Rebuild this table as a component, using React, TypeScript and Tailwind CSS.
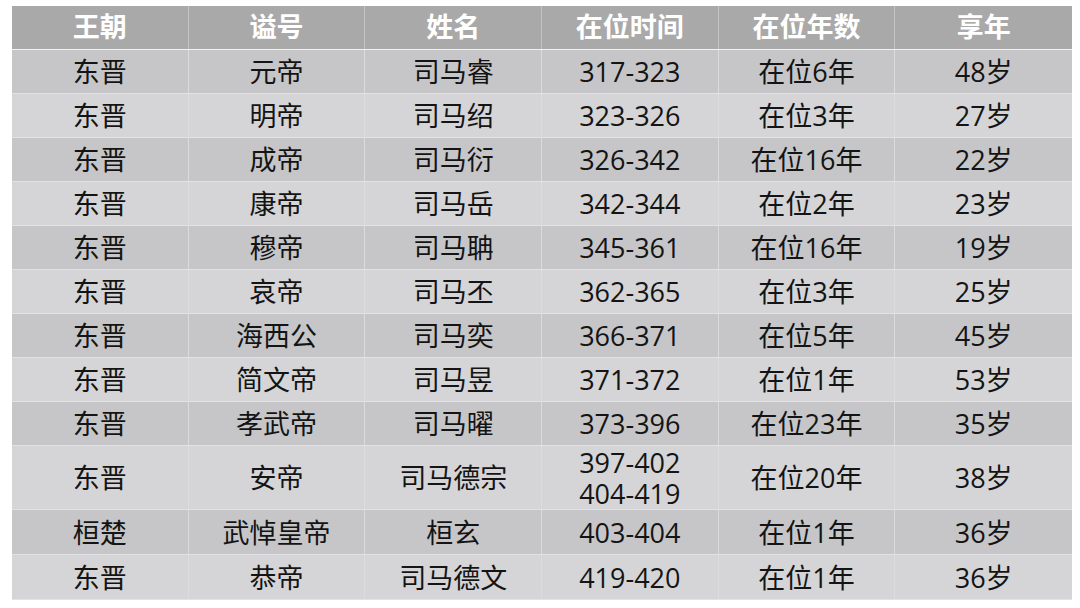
const rows: { cells: string[]; h: string }[] = [
  { cells: ["东晋", "元帝", "司马睿", "317-323", "在位6年", "48岁"], h: "h-[44px]" },
  { cells: ["东晋", "明帝", "司马绍", "323-326", "在位3年", "27岁"], h: "h-[44px]" },
  { cells: ["东晋", "成帝", "司马衍", "326-342", "在位16年", "22岁"], h: "h-[44px]" },
  { cells: ["东晋", "康帝", "司马岳", "342-344", "在位2年", "23岁"], h: "h-[44px]" },
  { cells: ["东晋", "穆帝", "司马聃", "345-361", "在位16年", "19岁"], h: "h-[44px]" },
  { cells: ["东晋", "哀帝", "司马丕", "362-365", "在位3年", "25岁"], h: "h-[44px]" },
  { cells: ["东晋", "海西公", "司马奕", "366-371", "在位5年", "45岁"], h: "h-[44px]" },
  { cells: ["东晋", "简文帝", "司马昱", "371-372", "在位1年", "53岁"], h: "h-[44px]" },
  { cells: ["东晋", "孝武帝", "司马曜", "373-396", "在位23年", "35岁"], h: "h-[44px]" },
  { cells: ["东晋", "安帝", "司马德宗", "397-402\n404-419", "在位20年", "38岁"], h: "h-[64px]" },
  { cells: ["桓楚", "武悼皇帝", "桓玄", "403-404", "在位1年", "36岁"], h: "h-[45px]" },
  { cells: ["东晋", "恭帝", "司马德文", "419-420", "在位1年", "36岁"], h: "h-[45px]" },
];

const headers = ["王朝", "谥号", "姓名", "在位时间", "在位年数", "享年"];

export default function App() {
  return (
    <div
      className="w-[1080px] h-[608px] bg-white pt-[6px] pl-[12px]"
      style={{ fontFamily: '"Open Sans", "Noto Sans CJK SC", sans-serif' }}
    >
      <div className="w-[1060px]">
        <div className="grid grid-cols-6 h-[44px] bg-[#a9a9a9] border-b border-[#f2f2f2]">
          {headers.map((t, i) => (
            <div
              key={t}
              className={
                "flex items-center justify-center text-[27px] font-bold text-white " +
                (i < 5 ? "border-r border-[#c4c4c4]" : "")
              }
            >
              {t}
            </div>
          ))}
        </div>
        {rows.map((r, ri) => (
          <div
            key={ri}
            className={
              "grid grid-cols-6 border-b border-[#e2e2e4] " +
              r.h +
              " " +
              (ri % 2 === 0 ? "bg-[#c6c6c8]" : "bg-[#d5d5d7]")
            }
          >
            {r.cells.map((c, ci) => (
              <div
                key={ci}
                className={
                  "flex flex-col items-center justify-center text-[27px] leading-[31px] text-[#141414] " +
                  (ci < 5 ? "border-r border-[#dcdcde]" : "")
                }
              >
                {c.split("\n").map((line) => (
                  <span key={line}>{line}</span>
                ))}
              </div>
            ))}
          </div>
        ))}
      </div>
    </div>
  );
}
